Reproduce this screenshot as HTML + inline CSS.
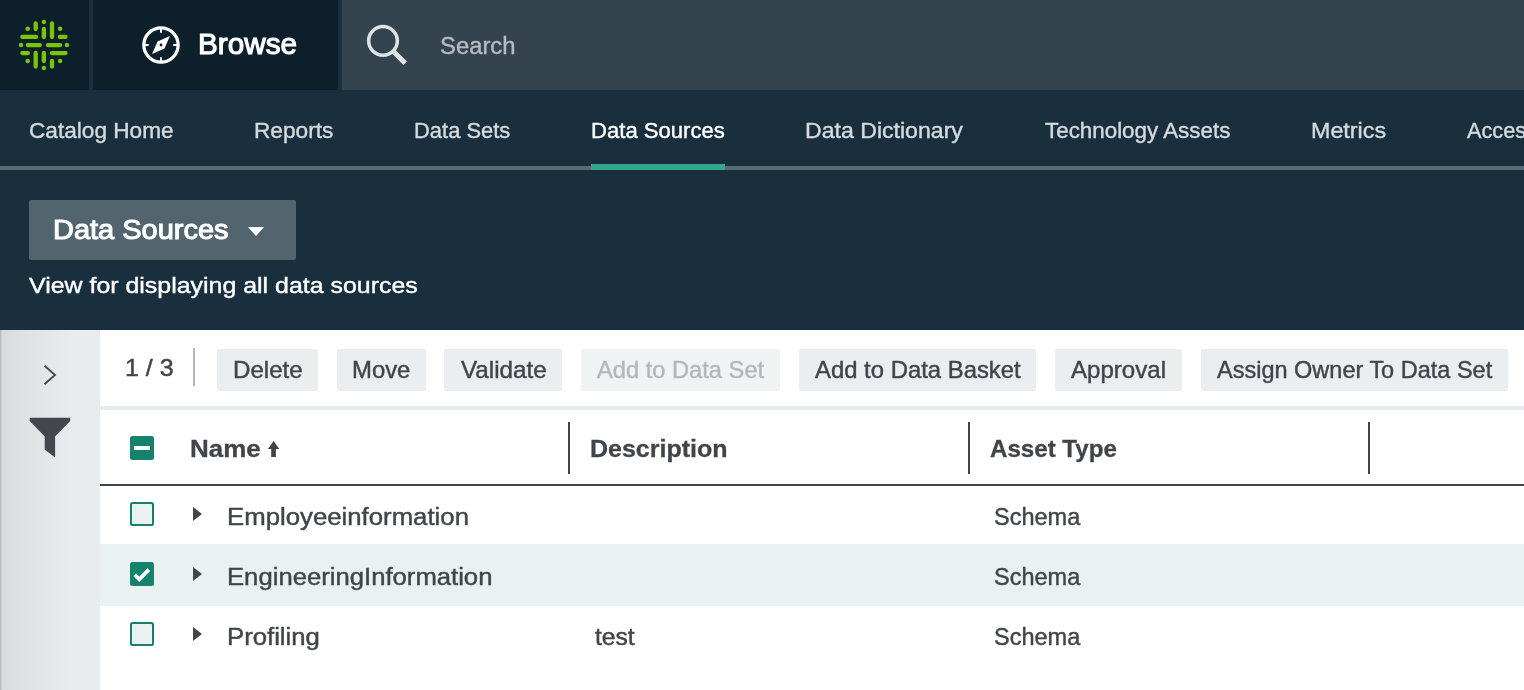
<!DOCTYPE html>
<html>
<head>
<meta charset="utf-8">
<title>Data Sources</title>
<style>
html,body{margin:0;padding:0;}
body{width:1524px;height:690px;overflow:hidden;position:relative;background:#ffffff;font-family:"Liberation Sans",sans-serif;}
.a{position:absolute;}
.t{position:absolute;white-space:nowrap;transform-origin:0 50%;}
#tx{position:absolute;left:0;top:0;width:1524px;height:690px;overflow:hidden;will-change:transform;}
.btn{position:absolute;top:349px;height:42px;background:#ebeef1;border-radius:2px;}
.sep{position:absolute;top:422px;height:52px;width:2px;background:#40454a;}
.cb{position:absolute;left:130px;width:20px;height:20px;border:2px solid #15826c;background:#eaf2f1;border-radius:2.5px;}
.tri{position:absolute;left:193px;width:0;height:0;border-left:9.6px solid #40454a;border-top:7.8px solid transparent;border-bottom:7.8px solid transparent;}
</style>
</head>
<body>
<!-- top bar -->
<div class="a" style="left:0;top:0;width:1524px;height:90px;background:#33444f;"></div>
<div class="a" style="left:0;top:0;width:342px;height:90px;background:#1a303e;"></div>
<div class="a" style="left:0;top:0;width:89px;height:90px;background:#0c1f2a;"></div>
<div class="a" style="left:93px;top:0;width:245px;height:90px;background:#0c1f2a;"></div>
<!-- sub nav + header -->
<div class="a" style="left:0;top:90px;width:1524px;height:240px;background:#1a2f3d;"></div>
<div class="a" style="left:0;top:166px;width:1524px;height:4px;background:#5a6b75;"></div>
<div class="a" style="left:591px;top:164px;width:134px;height:6px;background:#35a58c;"></div>
<div class="a" style="left:29px;top:200px;width:267px;height:60px;background:#52656f;border-radius:2px;"></div>
<div class="a" style="left:248px;top:227px;width:0;height:0;border-top:9.5px solid #ffffff;border-left:8.2px solid transparent;border-right:8.2px solid transparent;"></div>
<!-- sidebar -->
<div class="a" style="left:0;top:330px;width:100px;height:360px;background:linear-gradient(90deg,#b2b4b6 0px,#d9dcde 2.5px,#e0e3e5 30px,#e6e9ec 55px,#e9ecef 75px,#e9ecef 100px);"></div>
<svg class="a" style="left:0;top:330px;" width="100" height="360" viewBox="0 330 100 360">
  <polyline points="44.5,365.8 55,375 44.5,384.2" fill="none" stroke="#40454a" stroke-width="1.8"/>
  <path d="M29.7 417.8 H70.2 V421 L55.1 436.5 V457.6 L44.7 449.6 V436.5 L29.7 421 Z" fill="#42484e"/>
</svg>
<!-- toolbar -->
<div class="a" style="left:100px;top:406px;width:1424px;height:4px;background:#e9ecef;"></div>
<div class="a" style="left:193px;top:348px;width:2px;height:38px;background:#b2b3b4;"></div>
<div class="btn" style="left:217px;width:101px;"></div>
<div class="btn" style="left:337px;width:89px;"></div>
<div class="btn" style="left:444px;width:118px;"></div>
<div class="btn" style="left:581px;width:199px;background:#f0f3f4;"></div>
<div class="btn" style="left:799px;width:237px;"></div>
<div class="btn" style="left:1055px;width:127px;"></div>
<div class="btn" style="left:1201px;width:307px;"></div>
<!-- table -->
<div class="a" style="left:100px;top:544px;width:1424px;height:61.5px;background:#eaf2f1;"></div>
<div class="a" style="left:100px;top:484px;width:1424px;height:2px;background:#40454a;"></div>
<div class="sep" style="left:568px;"></div>
<div class="sep" style="left:968px;"></div>
<div class="sep" style="left:1368px;"></div>
<!-- header checkbox -->
<div class="a" style="left:130px;top:436px;width:24px;height:24px;background:#15826c;border-radius:2.5px;"></div>
<div class="a" style="left:134px;top:446px;width:16px;height:4px;background:#ffffff;"></div>
<!-- sort arrow -->
<svg class="a" style="left:266px;top:440px;" width="16" height="20" viewBox="266 440 16 20">
  <path d="M273.6 441.0 L279.3 448.9 H275.9 V456.9 H271.2 V448.9 H267.9 Z" fill="#40454a"/>
</svg>
<!-- row checkboxes -->
<div class="cb" style="top:502px;"></div>
<div class="a" style="left:130px;top:562px;width:24px;height:24px;background:#15826c;border-radius:2.5px;"></div>
<svg class="a" style="left:130px;top:562px;" width="24" height="24" viewBox="0 0 24 24">
  <polyline points="4.8,12.8 9.3,17.3 18.8,7.6" fill="none" stroke="#ffffff" stroke-width="3.8"/>
</svg>
<div class="cb" style="top:622px;"></div>
<div class="tri" style="top:507.2px;"></div>
<div class="tri" style="top:567.2px;"></div>
<div class="tri" style="top:627.2px;"></div>
<!-- logo -->
<svg class="a" style="left:14px;top:15px;" width="60" height="60" viewBox="14 15 60 60">
  <g stroke="#77c600" stroke-width="4.3" stroke-linecap="round" fill="none">
    <path d="M35.7 23.5 V29 M43.9 28.9 V37 M52 23.5 V37"/>
    <path d="M35.7 53 V66.5 M43.9 53 V61.1 M52 61 V66.5"/>
    <path d="M22.3 36.9 H36 M59.9 36.9 H65.5"/>
    <path d="M27.8 45.1 H39.9 M47.9 45.1 H60.1"/>
    <path d="M22.3 53.1 H27.9 M52 53.1 H65.5"/>
  </g>
  <g fill="#77c600">
    <circle cx="43.9" cy="22.1" r="2.25"/><circle cx="43.9" cy="67.9" r="2.25"/>
    <circle cx="21" cy="45.1" r="2.25"/><circle cx="66.9" cy="45.1" r="2.25"/>
    <circle cx="27.7" cy="28.8" r="2.25"/><circle cx="60.1" cy="28.8" r="2.25"/>
    <circle cx="27.7" cy="61.1" r="2.25"/><circle cx="60.1" cy="61.1" r="2.25"/>
  </g>
</svg>
<!-- compass -->
<svg class="a" style="left:136px;top:20px;" width="50" height="50" viewBox="136 20 50 50">
  <circle cx="161" cy="45" r="17.15" fill="none" stroke="#ffffff" stroke-width="3.3"/>
  <path d="M161 28 V32.7 M161 62 V57.3 M144 45 H148.7 M178 45 H173.3" stroke="#ffffff" stroke-width="2" fill="none"/>
  <path d="M169.9 36.1 L164.5 48.4 L152.1 53.9 L157.5 41.6 Z" fill="#ffffff"/>
  <circle cx="161" cy="45" r="1.4" fill="#0c1f2a"/>
</svg>
<!-- search icon -->
<svg class="a" style="left:356px;top:15px;" width="60" height="60" viewBox="356 15 60 60">
  <circle cx="383" cy="40.8" r="14.35" fill="none" stroke="#dfe3e6" stroke-width="3.5"/>
  <path d="M393.2 51.2 L405.2 63.3" stroke="#dfe3e6" stroke-width="5" fill="none"/>
</svg>
<!-- text -->
<div id="tx">
<span class="t" style="left:198.18px;top:30.45px;font-size:29px;line-height:29px;font-weight:400;color:#ffffff;transform:scaleX(1.0245);-webkit-text-stroke:1.10px #ffffff">Browse</span>
<span class="t" style="left:440.34px;top:34.53px;font-size:23px;line-height:23px;font-weight:400;color:#b5bcc1;transform:scaleX(1.0357);-webkit-text-stroke:0.41px #b5bcc1">Search</span>
<span class="t" style="left:29.21px;top:120.38px;font-size:22px;line-height:22px;font-weight:400;color:#d5dade;transform:scaleX(1.0281);-webkit-text-stroke:0.40px #d5dade">Catalog Home</span>
<span class="t" style="left:254.06px;top:120.38px;font-size:22px;line-height:22px;font-weight:400;color:#d5dade;transform:scaleX(1.0306);-webkit-text-stroke:0.40px #d5dade">Reports</span>
<span class="t" style="left:414.00px;top:120.38px;font-size:22px;line-height:22px;font-weight:400;color:#d5dade;transform:scaleX(0.9970);-webkit-text-stroke:0.40px #d5dade">Data Sets</span>
<span class="t" style="left:590.73px;top:120.38px;font-size:22px;line-height:22px;font-weight:400;color:#ffffff;transform:scaleX(1.0042);-webkit-text-stroke:0.40px #ffffff">Data Sources</span>
<span class="t" style="left:805.25px;top:120.38px;font-size:22px;line-height:22px;font-weight:400;color:#d5dade;transform:scaleX(1.0498);-webkit-text-stroke:0.40px #d5dade">Data Dictionary</span>
<span class="t" style="left:1044.60px;top:120.38px;font-size:22px;line-height:22px;font-weight:400;color:#d5dade;transform:scaleX(1.0170);-webkit-text-stroke:0.40px #d5dade">Technology Assets</span>
<span class="t" style="left:1310.96px;top:120.38px;font-size:22px;line-height:22px;font-weight:400;color:#d5dade;transform:scaleX(1.0590);-webkit-text-stroke:0.40px #d5dade">Metrics</span>
<span class="t" style="left:1467.23px;top:120.38px;font-size:22px;line-height:22px;font-weight:400;color:#d5dade;transform:scaleX(0.9868);-webkit-text-stroke:0.40px #d5dade">Access</span>
<span class="t" style="left:53.14px;top:215.80px;font-size:28px;line-height:28px;font-weight:400;color:#ffffff;transform:scaleX(1.0352);-webkit-text-stroke:1.06px #ffffff">Data Sources</span>
<span class="t" style="left:29.47px;top:274.30px;font-size:22.8px;line-height:22.8px;font-weight:400;color:#ffffff;transform:scaleX(1.0930);-webkit-text-stroke:0.41px #ffffff">View for displaying all data sources</span>
<span class="t" style="left:124.53px;top:355.68px;font-size:24px;line-height:24px;font-weight:400;color:#40454a;transform:scaleX(1.0414);-webkit-text-stroke:0.48px #40454a">1 / 3</span>
<span class="t" style="left:233.00px;top:358.17px;font-size:23.9px;line-height:23.9px;font-weight:400;color:#40454a;transform:scaleX(1.0098);-webkit-text-stroke:0.43px #40454a">Delete</span>
<span class="t" style="left:351.81px;top:358.17px;font-size:23.9px;line-height:23.9px;font-weight:400;color:#40454a;transform:scaleX(0.9998);-webkit-text-stroke:0.43px #40454a">Move</span>
<span class="t" style="left:461.17px;top:358.17px;font-size:23.9px;line-height:23.9px;font-weight:400;color:#40454a;transform:scaleX(1.0143);-webkit-text-stroke:0.43px #40454a">Validate</span>
<span class="t" style="left:597.45px;top:358.17px;font-size:23.9px;line-height:23.9px;font-weight:400;color:#b4b7b9;transform:scaleX(0.9910);-webkit-text-stroke:0.43px #b4b7b9">Add to Data Set</span>
<span class="t" style="left:814.70px;top:358.17px;font-size:23.9px;line-height:23.9px;font-weight:400;color:#40454a;transform:scaleX(0.9992);-webkit-text-stroke:0.43px #40454a">Add to Data Basket</span>
<span class="t" style="left:1071.32px;top:358.17px;font-size:23.9px;line-height:23.9px;font-weight:400;color:#40454a;transform:scaleX(1.0074);-webkit-text-stroke:0.43px #40454a">Approval</span>
<span class="t" style="left:1217.35px;top:358.17px;font-size:23.9px;line-height:23.9px;font-weight:400;color:#40454a;transform:scaleX(0.9836);-webkit-text-stroke:0.43px #40454a">Assign Owner To Data Set</span>
<span class="t" style="left:190.13px;top:437.18px;font-size:24.6px;line-height:24.6px;font-weight:700;color:#40454a;transform:scaleX(1.0568);-webkit-text-stroke:0.30px #40454a">Name</span>
<span class="t" style="left:589.94px;top:437.18px;font-size:24.6px;line-height:24.6px;font-weight:700;color:#40454a;transform:scaleX(1.0165);-webkit-text-stroke:0.30px #40454a">Description</span>
<span class="t" style="left:990.21px;top:437.18px;font-size:24.6px;line-height:24.6px;font-weight:700;color:#40454a;transform:scaleX(0.9804);-webkit-text-stroke:0.30px #40454a">Asset Type</span>
<span class="t" style="left:226.51px;top:505.09px;font-size:24.7px;line-height:24.7px;font-weight:400;color:#40454a;transform:scaleX(1.0434);-webkit-text-stroke:0.44px #40454a">Employeeinformation</span>
<span class="t" style="left:226.51px;top:565.09px;font-size:24.7px;line-height:24.7px;font-weight:400;color:#40454a;transform:scaleX(1.0398);-webkit-text-stroke:0.44px #40454a">EngineeringInformation</span>
<span class="t" style="left:226.51px;top:625.09px;font-size:24.7px;line-height:24.7px;font-weight:400;color:#40454a;transform:scaleX(1.0415);-webkit-text-stroke:0.44px #40454a">Profiling</span>
<span class="t" style="left:994.44px;top:505.09px;font-size:24.7px;line-height:24.7px;font-weight:400;color:#40454a;transform:scaleX(0.9518);-webkit-text-stroke:0.44px #40454a">Schema</span>
<span class="t" style="left:994.44px;top:565.09px;font-size:24.7px;line-height:24.7px;font-weight:400;color:#40454a;transform:scaleX(0.9518);-webkit-text-stroke:0.44px #40454a">Schema</span>
<span class="t" style="left:994.44px;top:625.09px;font-size:24.7px;line-height:24.7px;font-weight:400;color:#40454a;transform:scaleX(0.9518);-webkit-text-stroke:0.44px #40454a">Schema</span>
<span class="t" style="left:595.08px;top:625.09px;font-size:24.7px;line-height:24.7px;font-weight:400;color:#40454a;transform:scaleX(0.9977);-webkit-text-stroke:0.44px #40454a">test</span>
</div>
</body>
</html>
